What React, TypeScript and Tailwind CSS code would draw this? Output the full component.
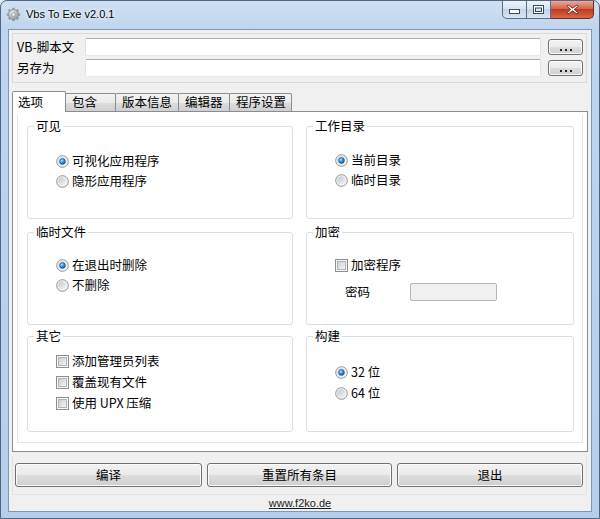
import React from "react";

const CJK = '"Noto Sans CJK SC", "Noto Sans", sans-serif';

function Radio({ checked }: { checked?: boolean }) {
  return (
    <svg width="13" height="13" viewBox="0 0 13 13" className="shrink-0">
      <defs>
        <linearGradient id="rgIn" x1="0" y1="0" x2="1" y2="1">
          <stop offset="0" stopColor="#c3c6cb" />
          <stop offset="1" stopColor="#f8f8f8" />
        </linearGradient>
        <radialGradient id="rgDot" cx="0.38" cy="0.35" r="0.75">
          <stop offset="0" stopColor="#b9e8ff" />
          <stop offset="0.45" stopColor="#3294dc" />
          <stop offset="1" stopColor="#0b4a8c" />
        </radialGradient>
      </defs>
      <circle cx="6.5" cy="6.5" r="5.8" fill="#f5f5f5" stroke="#8f9091" strokeWidth="1" />
      <circle cx="6.5" cy="6.5" r="4.3" fill="url(#rgIn)" />
      {checked && <circle cx="6.5" cy="6.5" r="2.9" fill="url(#rgDot)" stroke="#1b4f80" strokeWidth="0.5" />}
    </svg>
  );
}

function Check() {
  return (
    <svg width="13" height="13" viewBox="0 0 13 13" className="shrink-0">
      <defs>
        <linearGradient id="cbIn" x1="0" y1="0" x2="1" y2="1">
          <stop offset="0" stopColor="#c8ccd2" />
          <stop offset="1" stopColor="#f7f7f7" />
        </linearGradient>
      </defs>
      <rect x="0.5" y="0.5" width="12" height="12" fill="#f6f6f6" stroke="#8f8f8f" />
      <rect x="2.5" y="2.5" width="8" height="8" fill="url(#cbIn)" stroke="#b0b5bb" strokeWidth="1" />
    </svg>
  );
}

const btn =
  "rounded-[3px] border border-[#707070] bg-[linear-gradient(to_bottom,#f2f2f2_0%,#ebebeb_49%,#dddddd_50%,#cfcfcf_100%)] shadow-[inset_0_0_0_1px_#fbfbfb] flex items-center justify-center text-black";

const textbox =
  "h-[18px] bg-white border border-[#abadb3] border-l-[#dbe3ec] border-r-[#dbe3ec] border-b-[#e3e9ef] rounded-[2px]";

function Group({ title, className, children }: { title: string; className?: string; children?: React.ReactNode }) {
  return (
    <div className={"relative border border-[#d5dfe5] rounded-[3px] " + (className || "")}>
      <span className="absolute -top-[8px] left-[6px] px-[2px] bg-white leading-[14px]">{title}</span>
      {children}
    </div>
  );
}

function Item({ kind, checked, label, h = "h-[20px]" }: { kind: "radio" | "check"; checked?: boolean; label: string; h?: string }) {
  return (
    <div className={"flex items-center gap-[3px] " + h}>
      {kind === "radio" ? <Radio checked={checked} /> : <Check />}
      <span className="leading-none whitespace-pre">{label}</span>
    </div>
  );
}

function Gear() {
  const teeth = Array.from({ length: 8 }, (_, i) => i * 45);
  return (
    <svg width="15" height="15" viewBox="0 0 16 16">
      <defs>
        <radialGradient id="gearG" cx="0.4" cy="0.35" r="0.7">
          <stop offset="0" stopColor="#f4f4f4" />
          <stop offset="1" stopColor="#8a8f96" />
        </radialGradient>
      </defs>
      {teeth.map((a) => (
        <rect key={a} x="6.6" y="0.8" width="2.8" height="3.5" fill="#9aa0a7" transform={`rotate(${a} 8 8)`} />
      ))}
      <circle cx="8" cy="8" r="5.4" fill="url(#gearG)" stroke="#7d838b" strokeWidth="0.6" />
      <circle cx="8" cy="8" r="2.2" fill="#dfe6ee" stroke="#7d838b" strokeWidth="0.6" />
    </svg>
  );
}

function Tab({ label, w, selected }: { label: string; w: string; selected?: boolean }) {
  if (selected) {
    return (
      <div className={"relative z-10 -mb-px h-[21px] bg-white border border-b-0 border-[#898c95] rounded-t-[2px] pl-[5px] flex items-center " + w}>
        <span className="leading-none">{label}</span>
      </div>
    );
  }
  return (
    <div className={"-ml-px h-[18px] border border-b-0 border-[#898c95] rounded-t-[2px] bg-[linear-gradient(to_bottom,#f2f2f2,#ebebeb_50%,#dddddd_51%,#cfcfcf)] pl-[6px] flex items-center " + w}>
      <span className="leading-none">{label}</span>
    </div>
  );
}

function Dots() {
  return (
    <div className="flex gap-[3px] mt-[6px]">
      <span className="w-[2px] h-[2px] bg-[#222]" />
      <span className="w-[2px] h-[2px] bg-[#222]" />
      <span className="w-[2px] h-[2px] bg-[#222]" />
    </div>
  );
}

export default function App() {
  return (
    <div
      className="w-[600px] h-[519px] overflow-hidden bg-[#dfe9f5] text-[12.5px] text-black"
      style={{ fontFamily: CJK }}
    >
      <div className="w-[600px] h-[519px] flex flex-col border border-[#4f6784] rounded-t-[7px] bg-[linear-gradient(to_bottom,#cfe0f3_0px,#bfd5ee_28px,#b7cfea_100%)]">
        {/* Title bar */}
        <div className="h-[28px] flex items-start shrink-0 relative">
          <div className="flex items-center h-[26px] pl-[5px] gap-[5px]">
            <Gear />
            <span
              className="text-[11px] leading-none text-black [text-shadow:0_0_6px_#ffffff,0_0_3px_#ffffff]"
              style={{ fontFamily: '"Liberation Sans", Arial, sans-serif' }}
            >
              Vbs To Exe v2.0.1
            </span>
          </div>
          <div className="flex-1" />
          <div className="flex mr-[5px]">
            <div className="w-[25px] h-[18px] rounded-bl-[5px] border border-t-0 border-[#586d8a] bg-[linear-gradient(to_bottom,#eef3fa,#d9e4f1_45%,#c3d4e8_50%,#d8e4f2)] flex items-center justify-center">
              <svg width="11" height="5" viewBox="0 0 11 5" className="mt-[4px]">
                <rect x="0.5" y="0.5" width="10" height="4" fill="#ffffff" stroke="#3b4a5e" />
              </svg>
            </div>
            <div className="w-[24px] h-[18px] border border-t-0 border-l-0 border-[#586d8a] bg-[linear-gradient(to_bottom,#eef3fa,#d9e4f1_45%,#c3d4e8_50%,#d8e4f2)] flex items-center justify-center">
              <svg width="11" height="9" viewBox="0 0 11 9">
                <rect x="0.5" y="0.5" width="10" height="8" fill="#ffffff" stroke="#3b4a5e" />
                <rect x="2.5" y="3" width="6" height="3.5" fill="#dce5f0" stroke="#3b4a5e" />
              </svg>
            </div>
            <div className="w-[43px] h-[18px] rounded-br-[5px] border border-t-0 border-l-0 border-[#6a2b22] bg-[linear-gradient(to_bottom,#eaa99a,#d5644f_45%,#c2391f_50%,#d56a48)] flex items-center justify-center">
              <svg width="13" height="11" viewBox="0 0 13 11">
                <path
                  d="M2 1 L6.5 4.2 L11 1 L12.2 2.2 L8.2 5.5 L12.2 8.8 L11 10 L6.5 6.8 L2 10 L0.8 8.8 L4.8 5.5 L0.8 2.2 Z"
                  fill="#ffffff"
                  stroke="#5a1a10"
                  strokeWidth="0.8"
                />
              </svg>
            </div>
          </div>
        </div>

        {/* Client area */}
        <div className="mx-[7px] h-[483px] shrink-0 border border-[#7f97b5] bg-[#f0f0f0] flex flex-col">
          {/* Top panel */}
          <div className="mt-[3px] ml-[3px] w-[575px] h-[50px] border border-[#d9d9d9] pt-[4px] pl-[4px] flex flex-col gap-[3px]">
            <div className="flex items-center h-[18px]">
              <div className="w-[68px] h-[18px] overflow-hidden">
                <div className="w-[64px] leading-[15px] mt-[1px]">VB-脚本文件</div>
              </div>
              <div className={textbox + " w-[456px]"} />
              <div className={btn + " ml-[7px] w-[35px] h-[16px]"}>
                <Dots />
              </div>
            </div>
            <div className="flex items-center h-[18px]">
              <div className="w-[68px] leading-none">另存为</div>
              <div className={textbox + " w-[456px]"} />
              <div className={btn + " ml-[7px] w-[35px] h-[16px]"}>
                <Dots />
              </div>
            </div>
          </div>

          {/* Tabs */}
          <div className="mt-[8px] ml-[3px] h-[20px] flex items-end">
            <Tab label="选项" w="w-[54px]" selected />
            <Tab label="包含" w="w-[51px]" />
            <Tab label="版本信息" w="w-[64px]" />
            <Tab label="编辑器" w="w-[52px]" />
            <Tab label="程序设置" w="w-[63px]" />
          </div>
          <div className="ml-[3px] w-[576px] h-[341px] border border-[#898c95] bg-white pt-[2px] px-[4px] pb-[8px]">
            <div className="h-full border border-[#e3e3e3] border-t-0 pt-[12px] pl-[9px]">
              <div className="grid grid-cols-[266px_268px] gap-x-[13px]">
                <Group title="可见" className="h-[93px] pt-[24px] pl-[28px]">
                  <Item kind="radio" checked label="可视化应用程序" />
                  <Item kind="radio" label="隐形应用程序" />
                </Group>
                <Group title="工作目录" className="h-[93px] pt-[23px] pl-[28px]">
                  <Item kind="radio" checked label="当前目录" />
                  <Item kind="radio" label="临时目录" />
                </Group>
              </div>
              <div className="grid grid-cols-[266px_268px] gap-x-[13px] mt-[13px]">
                <Group title="临时文件" className="h-[93px] pt-[22px] pl-[28px]">
                  <Item kind="radio" checked label="在退出时删除" />
                  <Item kind="radio" label="不删除" />
                </Group>
                <Group title="加密" className="h-[93px] pt-[22px] pl-[28px]">
                  <Item kind="check" label="加密程序" />
                  <div className="flex items-center h-[18px] mt-[8px] pl-[10px]">
                    <span className="w-[65px] leading-none">密码</span>
                    <div className="w-[87px] h-[18px] rounded-[2px] border border-[#b5b5b5] bg-[#f0f0f0]" />
                  </div>
                </Group>
              </div>
              <div className="grid grid-cols-[266px_268px] gap-x-[13px] mt-[11px]">
                <Group title="其它" className="h-[96px] pt-[14px] pl-[28px]">
                  <Item kind="check" label="添加管理员列表" h="h-[21px]" />
                  <Item kind="check" label="覆盖现有文件" h="h-[21px]" />
                  <Item kind="check" label="使用 UPX 压缩" h="h-[21px]" />
                </Group>
                <Group title="构建" className="h-[96px] pt-[25px] pl-[28px]">
                  <Item kind="radio" checked label="32 位" h="h-[21px]" />
                  <Item kind="radio" label="64 位" h="h-[21px]" />
                </Group>
              </div>
            </div>
          </div>

          {/* Bottom buttons */}
          <div className="mt-[4px] ml-[3px] w-[575px] h-[39px] border border-[#e2e2e2] border-t-0 pt-[7px] pl-[2px] flex gap-[5px]">
            <div className={btn + " w-[187px] h-[24px]"}>
              <span className="leading-none">编译</span>
            </div>
            <div className={btn + " w-[185px] h-[24px]"}>
              <span className="leading-none">重置所有条目</span>
            </div>
            <div className={btn + " w-[186px] h-[24px]"}>
              <span className="leading-none">退出</span>
            </div>
          </div>
          <div className="h-[16px] flex items-center justify-center">
            <span
              className="text-[11px] leading-none underline text-[#1a1a1a]"
              style={{ fontFamily: '"Liberation Sans", Arial, sans-serif' }}
            >
              www.f2ko.de
            </span>
          </div>
        </div>
      </div>
    </div>
  );
}
